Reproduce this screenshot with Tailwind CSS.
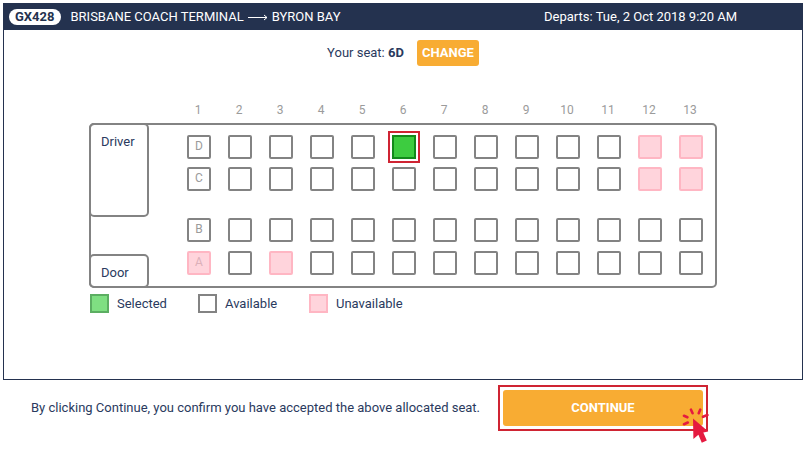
<!DOCTYPE html>
<html lang="en">
<head>
    <meta charset="UTF-8">
    <meta name="viewport" content="width=device-width, initial-scale=1.0">
    <title>Seat selection - GX428</title>
    <script src="https://cdn.jsdelivr.net/npm/@tailwindcss/browser@4"></script>
</head>
<body class="min-h-screen bg-white text-[#2a3a5e] font-['Roboto',sans-serif] text-[13px] leading-4 p-[3px]">
    <!-- Seat panel -->
    <main class="border border-[#24324f]">
        <header class="bg-[#24324f] text-white -mt-px flex items-center justify-between h-[27px] pl-[5px] pr-[65px]">
            <div class="flex items-center">
                <span class="bg-white text-[#24324f] font-bold rounded-full px-[6px]">GX428</span>
                <h1 class="flex items-center gap-1 ml-[10px]">
                    BRISBANE COACH TERMINAL
                    <svg class="w-5 h-2" viewBox="0 0 20 8" fill="none" stroke="currentColor" aria-label="to">
                        <path d="M0 4.5H19M16 2L19 4.5L16 7" />
                    </svg>
                    BYRON BAY
                </h1>
            </div>
            <p>Departs: Tue, 2 Oct 2018 9:20 AM</p>
        </header>

        <div class="flex justify-center items-center gap-[13px] pt-[10px]">
            <p>Your seat: <strong>6D</strong></p>
            <button type="button" class="bg-[#f8ac33] text-white font-bold rounded-[3px] w-[62px] h-[26px]">CHANGE</button>
        </div>

        <div class="w-full max-w-[628px] mx-auto pt-9 pb-[66px]">
            <!-- Row numbers -->
            <div id="row-numbers" class="grid grid-cols-[repeat(13,24px)] gap-x-[17px] pl-[97px] pb-[5px] text-center text-xs text-[#9b9b9b]"></div>

            <!-- Coach -->
            <div class="flex border-2 border-[#838383] rounded-[5px]">
                <div class="flex flex-col justify-between w-[60px] -my-[2px] -ml-[2px]">
                    <div class="border-2 border-[#838383] rounded-[5px] h-[94px] px-[10px] pt-[9px]">Driver</div>
                    <div class="border-2 border-[#838383] rounded-[5px] h-[34px] px-[10px] pt-[9px]">Door</div>
                </div>
                <div id="seats" class="ml-[38px] pt-[10px] pb-[11px]"></div>
            </div>

            <!-- Legend -->
            <ul class="flex pt-[6px] pl-px">
                <li class="flex items-center gap-2 w-[108px]"><span class="size-[19px] border-2 border-[#5cae62] bg-[#7fdf82]"></span>Selected</li>
                <li class="flex items-center gap-2 w-[111px]"><span class="size-[19px] border-2 border-[#838383]"></span>Available</li>
                <li class="flex items-center gap-2"><span class="size-[19px] border-2 border-[#ffb6c3] bg-[#ffd4dc]"></span>Unavailable</li>
            </ul>
        </div>
    </main>

    <!-- Confirm -->
    <footer class="flex items-center justify-between pt-[5px] pb-4 pl-7 pr-[95px]">
        <p>By clicking Continue, you confirm you have accepted the above allocated seat.</p>
        <div class="relative border-2 border-[#cf2433] p-[3px]">
            <button type="button" class="block bg-[#f8ac33] text-white font-bold rounded-[3px] w-[200px] h-9">CONTINUE</button>
            <svg class="absolute -right-[3px] -bottom-[14px] w-7 h-9" viewBox="0 0 28 36" fill="none" aria-hidden="true">
                <path d="M3 8.8L6.4 10.3M10 2.7L11.6 6.2M19.2 2.7L17.7 6.2M22 9.8L26.4 8M3 17.2L6.8 15.5" stroke="#e51a40" stroke-width="2.6" stroke-linecap="round" />
                <path d="M12 11.5L27.3 24.6L22.3 25.5L25.8 33.5L20.8 35.8L17.4 27.8L12.4 32Z" fill="#e51a40" />
            </svg>
        </div>
    </footer>

    <script>
        const unavailable = ['12D', '13D', '12C', '13C', '1A', '3A'];
        const selected = '6D';
        const seats = document.getElementById('seats');
        const rowNumbers = document.getElementById('row-numbers');

        // space under each line of seats, the aisle is between C and B
        const lines = { D: 'mb-2', C: 'mb-[27px]', B: 'mb-[9px]', A: 'mb-0' };

        for (let i = 1; i <= 13; i++) {
            rowNumbers.innerHTML += `<span>${i}</span>`;
        }

        Object.keys(lines).forEach(letter => {
            const line = document.createElement('div');
            line.className = `grid grid-cols-[repeat(13,24px)] gap-x-[17px] ${lines[letter]}`;

            for (let i = 1; i <= 13; i++) {
                const seat = document.createElement('button');
                seat.type = 'button';
                seat.setAttribute('aria-label', `Seat ${i}${letter}`);
                seat.className = 'size-6 border-2 flex justify-center text-xs leading-[18px] ';

                if (i + letter === selected) {
                    seat.className += 'border-[#128a1b] bg-[#3dcc40] outline-2 outline-offset-[2px] outline-[#cf2433]';
                } else if (unavailable.includes(i + letter)) {
                    seat.className += 'rounded-[2px] border-[#ffb6c3] bg-[#ffd4dc] text-[#dcb0b9]';
                    seat.disabled = true;
                } else {
                    seat.className += 'rounded-[2px] border-[#838383] text-[#9b9b9b]';
                }

                if (i === 1) seat.textContent = letter;
                line.appendChild(seat);
            }
            seats.appendChild(line);
        });
    </script>
</body>
</html>
